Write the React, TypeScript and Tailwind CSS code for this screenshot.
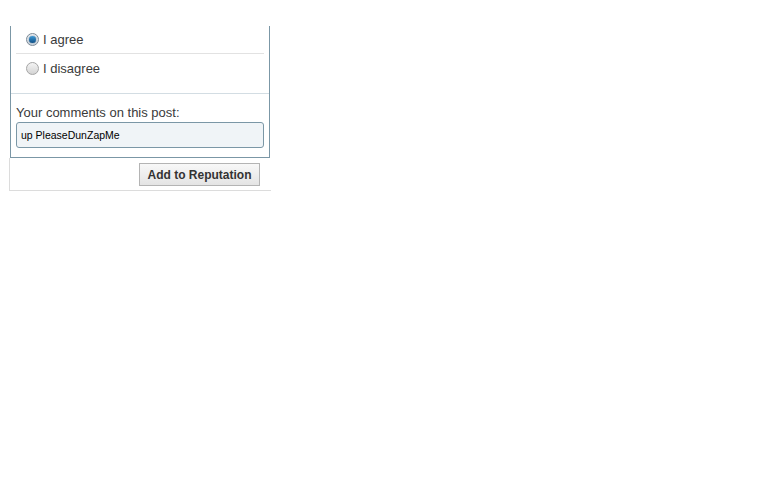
import { useState } from "react";

const font = { fontFamily: '"Liberation Sans", Arial, sans-serif' };

function Radio({ checked }: { checked: boolean }) {
  return (
    <span
      className={
        "relative inline-flex h-[13px] w-[13px] shrink-0 items-center justify-center rounded-full border " +
        (checked
          ? "border-[#7d8a96] bg-gradient-to-b from-[#e8edf2] to-[#c9d3dc]"
          : "border-[#a5a5a5] bg-gradient-to-b from-[#f4f4f4] to-[#d4d4d4]")
      }
    >
      {checked && (
        <span className="h-[7px] w-[7px] rounded-full bg-gradient-to-b from-[#3f9ad6] to-[#0d4f86] shadow-[0_0_1px_#0b3a63]" />
      )}
    </span>
  );
}

export default function App() {
  const [choice, setChoice] = useState<"agree" | "disagree">("agree");
  const [comment, setComment] = useState("up PleaseDunZapMe");

  return (
    <div className="min-h-screen bg-white pt-[26px]" style={font}>
      <div className="ml-[10px] w-[260px] border-x border-b border-[#7b97a6]">
        <div className="px-[5px] pb-[10px]">
          <label
            className="flex h-[28px] cursor-pointer items-center gap-[4px] border-b border-[#e2e2e2] pl-[10px] text-[13px] text-[#3a3a3a]"
            onClick={() => setChoice("agree")}
          >
            <Radio checked={choice === "agree"} />
            <span>I agree</span>
          </label>
          <label
            className="flex h-[29px] cursor-pointer items-center gap-[4px] pl-[10px] text-[13px] text-[#3a3a3a]"
            onClick={() => setChoice("disagree")}
          >
            <Radio checked={choice === "disagree"} />
            <span>I disagree</span>
          </label>
        </div>
        <div className="border-t border-[#d3dde3] px-[5px] pt-[11px] pb-[9px]">
          <div className="mb-[1px] text-[13px] leading-[16px] text-[#3a3a3a]">
            Your comments on this post:
          </div>
          <input
            value={comment}
            onChange={(e) => setComment(e.target.value)}
            className="block h-[26px] w-full rounded-[3px] border border-[#7b97a6] bg-[#f0f4f7] px-[4px] text-[10.5px] text-black outline-none"
            style={font}
          />
        </div>
      </div>
      <div className="ml-[9px] flex h-[33px] w-[262px] justify-end border-b border-l border-[#dcdcdc] pt-[5px] pr-[11px]">
        <button
          className="h-[23px] w-[121px] border border-[#b4b4b4] bg-gradient-to-b from-[#f8f8f8] to-[#e4e4e4] text-[12px] font-bold text-[#333]"
          style={font}
        >
          Add to Reputation
        </button>
      </div>
    </div>
  );
}
